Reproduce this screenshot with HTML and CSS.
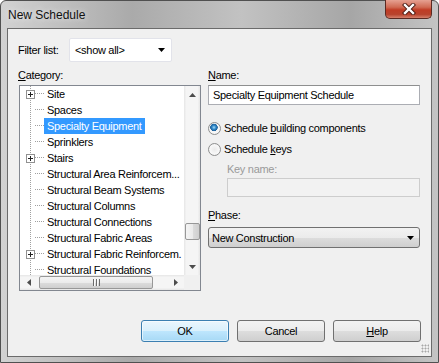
FILE: index.html
```html
<!DOCTYPE html>
<html lang="en">
<head>
    <meta charset="UTF-8">
    <title>New Schedule</title>
    <link rel="stylesheet" href="styles.css">
</head>
<body>
    <div class="window">
        <div class="titlebar">
            <span class="title">New Schedule</span>
            <div class="close">
                <svg width="16" height="12" viewBox="0 0 16 12">
                    <path d="M4 2 L12 10 M12 2 L4 10" stroke="#4a1a12" stroke-width="4.2" stroke-linecap="square"/>
                    <path d="M4 2 L12 10 M12 2 L4 10" stroke="#ffffff" stroke-width="2.4" stroke-linecap="square"/>
                </svg>
            </div>
        </div>

        <div class="client">
            <div class="filter-row">
                <span class="filter-label">Filter list:</span>
                <div class="combo-edit">
                    <span>&lt;show all&gt;</span>
                    <svg width="7" height="4" viewBox="0 0 7 4"><polygon points="0,0 7,0 3.5,4" fill="#000"/></svg>
                </div>
            </div>

            <div class="main">
                <div class="left-col">
                    <div class="field-label"><u>C</u>ategory:</div>
                    <div class="tree">
                        <div class="tree-body">
                            <div class="tree-rows">
                                <div class="node"><span class="branch"><svg class="plus" width="9" height="9" viewBox="0 0 9 9"><rect x="0.5" y="0.5" width="8" height="8" fill="#fff" stroke="#919191"/><path d="M2 4.5 H7 M4.5 2 V7" stroke="#222"/></svg><span class="dots"></span></span><span class="label">Site</span></div>
                                <div class="node"><span class="branch"><span class="nobox"></span><span class="dots"></span></span><span class="label">Spaces</span></div>
                                <div class="node"><span class="branch"><span class="nobox"></span><span class="dots"></span></span><span class="label selected">Specialty Equipment</span></div>
                                <div class="node"><span class="branch"><span class="nobox"></span><span class="dots"></span></span><span class="label">Sprinklers</span></div>
                                <div class="node"><span class="branch"><svg class="plus" width="9" height="9" viewBox="0 0 9 9"><rect x="0.5" y="0.5" width="8" height="8" fill="#fff" stroke="#919191"/><path d="M2 4.5 H7 M4.5 2 V7" stroke="#222"/></svg><span class="dots"></span></span><span class="label">Stairs</span></div>
                                <div class="node"><span class="branch"><span class="nobox"></span><span class="dots"></span></span><span class="label">Structural Area Reinforcem...</span></div>
                                <div class="node"><span class="branch"><span class="nobox"></span><span class="dots"></span></span><span class="label">Structural Beam Systems</span></div>
                                <div class="node"><span class="branch"><span class="nobox"></span><span class="dots"></span></span><span class="label">Structural Columns</span></div>
                                <div class="node"><span class="branch"><span class="nobox"></span><span class="dots"></span></span><span class="label">Structural Connections</span></div>
                                <div class="node"><span class="branch"><span class="nobox"></span><span class="dots"></span></span><span class="label">Structural Fabric Areas</span></div>
                                <div class="node"><span class="branch"><svg class="plus" width="9" height="9" viewBox="0 0 9 9"><rect x="0.5" y="0.5" width="8" height="8" fill="#fff" stroke="#919191"/><path d="M2 4.5 H7 M4.5 2 V7" stroke="#222"/></svg><span class="dots"></span></span><span class="label">Structural Fabric Reinforcem.</span></div>
                                <div class="node"><span class="branch"><span class="nobox"></span><span class="dots"></span></span><span class="label">Structural Foundations</span></div>
                            </div>
                            <div class="vscroll">
                                <div class="sb-btn"><svg width="7" height="4" viewBox="0 0 7 4"><polygon points="0,4 7,4 3.5,0" fill="#4d4d4d"/></svg></div>
                                <div class="vtrack"><div class="vthumb"></div></div>
                                <div class="sb-btn"><svg width="7" height="4" viewBox="0 0 7 4"><polygon points="0,0 7,0 3.5,4" fill="#4d4d4d"/></svg></div>
                            </div>
                        </div>
                        <div class="hscroll">
                            <div class="sb-btn hbtn"><svg width="4" height="7" viewBox="0 0 4 7"><polygon points="4,0 4,7 0,3.5" fill="#4d4d4d"/></svg></div>
                            <div class="htrack"><div class="hthumb"><span class="grip"></span></div></div>
                            <div class="sb-btn hbtn"><svg width="4" height="7" viewBox="0 0 4 7"><polygon points="0,0 0,7 4,3.5" fill="#4d4d4d"/></svg></div>
                            <div class="corner"></div>
                        </div>
                    </div>
                </div>

                <div class="right-col">
                    <div class="field-label"><u>N</u>ame:</div>
                    <div class="textbox">Specialty Equipment Schedule</div>

                    <div class="radio-row first">
                        <span class="radio checked"></span>
                        <span>Schedule <u>b</u>uilding components</span>
                    </div>
                    <div class="radio-row">
                        <span class="radio"></span>
                        <span>Schedule <u>k</u>eys</span>
                    </div>

                    <div class="keyname">
                        <div class="field-label disabled">Key name:</div>
                        <div class="textbox off"></div>
                    </div>

                    <div class="field-label phase-label"><u>P</u>hase:</div>
                    <div class="combo-btn">
                        <span>New Construction</span>
                        <svg width="7" height="4" viewBox="0 0 7 4"><polygon points="0,0 7,0 3.5,4" fill="#000"/></svg>
                    </div>
                </div>
            </div>

            <div class="buttons">
                <div class="btn default">OK</div>
                <div class="btn">Cancel</div>
                <div class="btn"><u>H</u>elp</div>
            </div>
            <div class="grip-row"><span class="size-grip"></span></div>
        </div>
    </div>
</body>
</html>
```

FILE: styles.css
```css
body {
    margin: 0;
    background: #ffffff;
    font-family: "Liberation Sans", Arial, sans-serif;
    font-size: 11px;
    letter-spacing: -0.3px;
    color: #000;
}

.window {
    width: 439px;
    height: 363px;
    box-sizing: border-box;
    border: 1px solid #505050;
    border-radius: 6px 6px 0 0;
    background: linear-gradient(to right, #d2d2d2, #aaaaaa 30%, #c2c2c2 55%, #a6a6a6 80%, #c4c4c4);
    padding: 0 6px 5px 6px;
    display: flex;
    flex-direction: column;
}

/* title bar */

.titlebar {
    height: 27px;
    display: flex;
    justify-content: space-between;
    align-items: flex-start;
}

.title {
    font-size: 12px;
    letter-spacing: 0;
    line-height: 16px;
    margin: 6px 0 0 1px;
    color: #111;
    text-shadow: 0 0 6px rgba(255, 255, 255, 0.8);
}

.close {
    width: 47px;
    height: 19px;
    margin-top: -1px;
    box-sizing: border-box;
    border: 1px solid #5b2a22;
    border-top: none;
    border-radius: 0 0 5px 5px;
    background: linear-gradient(#e6a192, #d06a53 40%, #c03c25 55%, #b8432d 80%, #d5806c);
    display: flex;
    align-items: center;
    justify-content: center;
}

/* client area */

.client {
    flex: 1;
    border: 1px solid #6b6b6b;
    background: #f0f0f0;
    padding: 9px 10px 0 10px;
    display: flex;
    flex-direction: column;
}

.filter-row {
    display: flex;
    align-items: center;
    height: 24px;
}

.filter-label {
    width: 51px;
}

.combo-edit {
    width: 103px;
    height: 24px;
    box-sizing: border-box;
    border: 1px solid #e2e3ea;
    border-radius: 2px;
    background: #fff;
    display: flex;
    align-items: center;
    justify-content: space-between;
    padding: 0 6px 0 5px;
}

.main {
    display: flex;
    margin-top: 6px;
}

.field-label {
    line-height: 15px;
    height: 15px;
}

.field-label.disabled {
    color: #9a9a9a;
}

/* category tree */

.left-col {
    width: 183px;
}

.tree {
    width: 182px;
    height: 206px;
    margin: 2px 0 0 1px;
    box-sizing: border-box;
    border: 1px solid #828790;
    background: #fff;
    display: flex;
    flex-direction: column;
}

.tree-body {
    flex: 1;
    display: flex;
    min-height: 0;
}

.tree-rows {
    flex: 1;
    overflow: hidden;
    padding-top: 0;
    background-image: linear-gradient(#a0a0a0 50%, transparent 50%);
    background-size: 1px 2px;
    background-repeat: repeat-y;
    background-position: 10px 0;
}

.node {
    display: flex;
    align-items: center;
    height: 16px;
    white-space: nowrap;
}

.branch {
    width: 24px;
    height: 16px;
    flex: none;
    display: flex;
    align-items: center;
}

.plus,
.nobox {
    width: 9px;
    height: 9px;
    margin-left: 6px;
    flex: none;
}

.dots {
    flex: 1;
    height: 1px;
    margin-top: -1px;
    background-image: linear-gradient(to right, #a0a0a0 50%, transparent 50%);
    background-size: 2px 1px;
}

.label {
    line-height: 16px;
    height: 16px;
    padding: 0 3px;
}

.label.selected {
    background: #3399ff;
    color: #fff;
}

/* scrollbars */

.vscroll {
    width: 16px;
    display: flex;
    flex-direction: column;
    background: linear-gradient(to right, #e6e6e6, #f5f5f5 15%, #f5f5f5 85%, #e6e6e6);
}

.sb-btn {
    height: 17px;
    display: flex;
    align-items: center;
    justify-content: center;
    flex: none;
}

.vtrack {
    flex: 1;
}

.vthumb {
    height: 15px;
    margin: 120px 0 0 1px;
    border: 1px solid #979797;
    border-radius: 2px;
    background: linear-gradient(to right, #f4f4f4, #ebebeb 50%, #dcdcdc 51%, #cfcfcf);
}

.hscroll {
    height: 15px;
    display: flex;
    background: linear-gradient(#e6e6e6, #f5f5f5 15%, #f5f5f5 85%, #e6e6e6);
}

.hbtn {
    width: 17px;
    height: 15px;
}

.htrack {
    flex: 1;
    display: flex;
    align-items: center;
}

.hthumb {
    width: 112px;
    height: 11px;
    margin-left: 2px;
    border: 1px solid #979797;
    border-radius: 2px;
    background: linear-gradient(#f4f4f4, #ebebeb 50%, #dcdcdc 51%, #cfcfcf);
    display: flex;
    align-items: center;
    justify-content: center;
}

.grip {
    width: 7px;
    height: 7px;
    background: repeating-linear-gradient(to right, #6c6c6c 0 1px, #fafafa 1px 2px, transparent 2px 3px);
}

.corner {
    width: 16px;
    background: #f0f0f0;
}

/* right column */

.right-col {
    width: 212px;
    margin-left: 7px;
}

.textbox {
    height: 20px;
    margin-top: 2px;
    box-sizing: border-box;
    border: 1px solid #abadb3;
    border-top-color: #8e8f8f;
    background: #fff;
    line-height: 18px;
    padding-left: 4px;
}

.textbox.off {
    height: 19px;
    margin-top: 1px;
    border-color: #cdcdcd;
    background: #f2f2f2;
}

.radio-row {
    display: flex;
    align-items: center;
    height: 16px;
    margin-top: 5px;
}

.radio-row.first {
    margin-top: 15px;
}

.radio {
    width: 13px;
    height: 13px;
    box-sizing: border-box;
    border: 1px solid #8e8f8f;
    border-radius: 50%;
    background: radial-gradient(circle at 50% 50%, #eaeaea, #f8f8f8 60%, #dcdcdc);
    margin-right: 3px;
}

.radio.checked {
    background:
        radial-gradient(circle at 45% 40%, #a7dcf7 0, #2e87c8 2px, #1d5f99 3.5px, transparent 4px),
        radial-gradient(circle at 50% 50%, #eaeaea, #f8f8f8 60%, #dcdcdc);
}

.keyname {
    margin: 5px 0 0 19px;
}

.phase-label {
    margin-top: 11px;
}

.combo-btn {
    height: 21px;
    margin-top: 4px;
    box-sizing: border-box;
    border: 1px solid #707070;
    border-radius: 3px;
    background: linear-gradient(#f2f2f2, #ebebeb 50%, #dddddd 51%, #cfcfcf);
    display: flex;
    align-items: center;
    justify-content: space-between;
    padding: 0 5px 0 3px;
}

/* buttons */

.buttons {
    display: flex;
    justify-content: flex-end;
    gap: 8px;
    margin-top: 29px;
}

.btn {
    width: 88px;
    height: 22px;
    box-sizing: border-box;
    border: 1px solid #707070;
    border-radius: 3px;
    background: linear-gradient(#f2f2f2, #ebebeb 50%, #dddddd 51%, #cfcfcf);
    text-align: center;
    line-height: 20px;
}

.btn.default {
    border-color: #3c7fb1;
    background: linear-gradient(#eaf6fd, #d9f0fc 50%, #bee6fd 51%, #a7d9f5);
    box-shadow: inset 0 0 0 1px rgba(255, 255, 255, 0.6);
}

.grip-row {
    display: flex;
    justify-content: flex-end;
    margin: 2px -8px 0 0;
}

.size-grip {
    width: 8px;
    height: 9px;
    background-image: radial-gradient(circle, #a8a8a8 0.8px, transparent 1.2px);
    background-size: 3px 3px;
}
```
